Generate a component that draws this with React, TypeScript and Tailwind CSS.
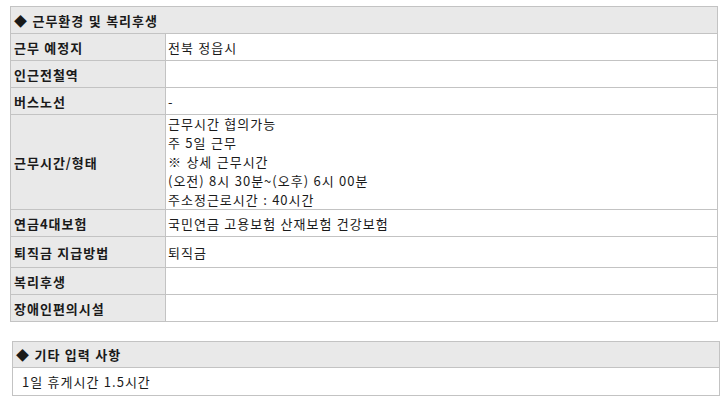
import React from "react";

const font = { fontFamily: '"Noto Sans CJK KR", "Noto Sans", sans-serif' };

function Row({ label, h, children }: { label: string; h: string; children?: React.ReactNode }) {
  return (
    <div className={`flex border-t border-[#c3c3c3] ${h}`}>
      <div className="w-[155px] shrink-0 border-r border-[#c3c3c3] bg-[#e9e9e9] pl-[3px] flex items-center font-bold text-[#1a1a1a]">
        {label}
      </div>
      <div className="flex-1 pl-[2px] flex items-center text-[#1a1a1a]">{children}</div>
    </div>
  );
}

export default function App() {
  return (
    <div
      className="w-[726px] h-[402px] bg-white text-[13px] tracking-[1px] [word-spacing:0.5px] leading-[19px] overflow-hidden"
      style={font}
    >
      <div className="ml-[10px] mt-[6px] w-[708px] border border-[#c3c3c3]">
        <div className="h-[26px] bg-[#e9e9e9] pl-[3px] flex items-center font-bold text-[#1a1a1a]">
          ◆ 근무환경 및 복리후생
        </div>
        <Row label="근무 예정지" h="h-[27px]">전북 정읍시</Row>
        <Row label="인근전철역" h="h-[27px]" />
        <Row label="버스노선" h="h-[27px]">-</Row>
        <div className="flex border-t border-[#c3c3c3] h-[95px]">
          <div className="w-[155px] shrink-0 border-r border-[#c3c3c3] bg-[#e9e9e9] pl-[3px] flex items-center font-bold text-[#1a1a1a]">
            근무시간/형태
          </div>
          <div className="flex-1 pl-[2px] flex flex-col text-[#1a1a1a] -mt-[1px]">
            <div>근무시간 협의가능</div>
            <div>주 5일 근무</div>
            <div>※ 상세 근무시간</div>
            <div>(오전) 8시 30분~(오후) 6시 00분</div>
            <div>주소정근로시간 : 40시간</div>
          </div>
        </div>
        <Row label="연금4대보험" h="h-[27px]">국민연금 고용보험 산재보험 건강보험</Row>
        <Row label="퇴직금 지급방법" h="h-[31px]">퇴직금</Row>
        <Row label="복리후생" h="h-[27px]" />
        <Row label="장애인편의시설" h="h-[27px]" />
      </div>

      <div className="ml-[12px] mt-[19px] w-[708px] border border-[#c3c3c3]">
        <div className="h-[25px] bg-[#e9e9e9] pl-[3px] flex items-center font-bold text-[#1a1a1a]">
          ◆ 기타 입력 사항
        </div>
        <div className="h-[28px] border-t border-[#c3c3c3] pl-[9px] flex items-center text-[#1a1a1a]">
          1일 휴게시간 1.5시간
        </div>
      </div>
    </div>
  );
}
